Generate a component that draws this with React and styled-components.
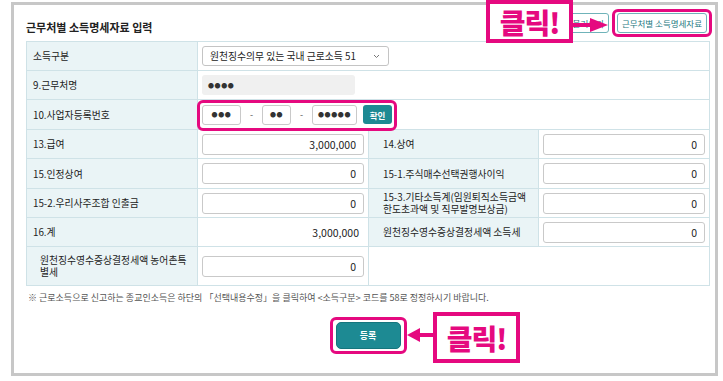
import styled, { createGlobalStyle } from "styled-components";

const MAGENTA = "#e5097f";
const TEAL = "#1d8a93";
const LINE = "#cfe2e7";
const FONT = `"Noto Sans CJK KR", "Noto Sans", sans-serif`;

const GlobalStyle = createGlobalStyle`
  body {
    margin: 0;
    background: #fff;
    font-family: ${FONT};
    color: #333;
  }
  * { box-sizing: border-box; }
`;

const Page = styled.div`
  position: relative;
  width: 723px;
  height: 381px;
  padding: 2px 0 0 11px;
  overflow: hidden;
`;

const Frame = styled.div`
  width: 707px;
  height: 374px;
  border: 3px solid #c7c7c7;
  padding: 0 5px 0 12px;
  display: flex;
  flex-direction: column;
`;

const Header = styled.div`
  display: flex;
  justify-content: space-between;
  align-items: flex-start;
  height: 36px;
  padding-right: 3px;
`;

const Title = styled.h2`
  align-self: flex-end;
  margin: 0 0 7px;
  font-size: 11px;
  line-height: 13px;
  font-weight: 700;
  color: #222;
`;

const Tools = styled.div`
  display: flex;
  gap: 8px;
  margin-top: 8px;
`;

const ToolButton = styled.button`
  height: 20px;
  padding: 0 4px;
  border: 1px solid #6fb3b9;
  border-radius: 3px;
  background: #fff;
  color: #1b7780;
  font-family: ${FONT};
  font-size: 8.5px;
  white-space: nowrap;
`;

const Ring = styled.div`
  position: relative;
  display: inline-flex;
  align-items: center;
  &::after {
    content: "";
    position: absolute;
    inset: ${(p) => p.$inset || "-5px"};
    border: 3px solid ${MAGENTA};
    border-radius: 6px;
    pointer-events: none;
  }
`;

const Grid = styled.div`
  display: grid;
  grid-template-columns: 171px 171px 170px 171px;
  grid-template-rows: 29px 29px 30px 29px 30px 29px 29px 39px;
  border-top: 1px solid ${LINE};
  border-left: 1px solid ${LINE};
`;

const Label = styled.div`
  display: flex;
  align-items: center;
  padding: 0 ${(p) => p.$end || 6}px 0 ${(p) => p.$indent || 6}px;
  background: #eaf4f6;
  border-right: 1px solid ${LINE};
  border-bottom: 1px solid ${LINE};
  font-size: 9.8px;
  line-height: 12px;
  color: #222;
  word-break: ${(p) => (p.$keep ? "keep-all" : "break-all")};
`;

const Value = styled.div`
  grid-column: span ${(p) => p.$span || 1};
  display: flex;
  align-items: center;
  justify-content: ${(p) => (p.$right ? "flex-end" : "flex-start")};
  padding: 0 ${(p) => (p.$right ? 9 : 4)}px 0 4px;
  background: #fff;
  border-right: 1px solid ${LINE};
  border-bottom: 1px solid ${LINE};
  font-size: 10.5px;
  color: #222;
`;

const Amount = styled.input`
  width: 100%;
  height: 21px;
  padding: 0 7px;
  border: 1px solid #c9c9c9;
  border-radius: 3px;
  background: #fff;
  font-family: ${FONT};
  font-size: 10.5px;
  color: #222;
  text-align: right;
  outline: none;
`;

const SelectBox = styled.div`
  display: flex;
  align-items: center;
  justify-content: space-between;
  width: 187px;
  height: 20px;
  padding: 0 8px 0 7px;
  border: 1px solid #c4c4c4;
  border-radius: 3px;
  font-size: 9.8px;
  color: #222;
`;

const Masked = styled.div`
  display: flex;
  align-items: center;
  justify-content: ${(p) => (p.$center ? "center" : "flex-start")};
  width: ${(p) => p.$w}px;
  height: 20px;
  padding: 0 6px;
  border: ${(p) => (p.$plain ? "none" : "1px solid #c9c9c9")};
  border-radius: 3px;
  background: ${(p) => (p.$plain ? "#f0f0f0" : "#fff")};
  font-size: 6px;
  letter-spacing: 0.6px;
  color: #333;
`;

const Dash = styled.span`
  width: 21px;
  text-align: center;
  font-size: 9px;
  color: #555;
`;

const SmallTeal = styled.button`
  margin-left: 6px;
  width: 29px;
  height: 19px;
  padding: 0;
  border: none;
  border-radius: 3px;
  background: ${TEAL};
  color: #fff;
  font-family: ${FONT};
  font-size: 8.5px;
  font-weight: 700;
`;

const Note = styled.p`
  margin: 6px 0 0 2px;
  font-size: 9px;
  line-height: 12px;
  color: #555;
  white-space: nowrap;
`;

const Footer = styled.div`
  display: flex;
  justify-content: center;
  margin-top: 18px;
`;

const SubmitButton = styled.button`
  width: 65px;
  height: 27px;
  border: 1px solid #15757d;
  border-radius: 5px;
  background: ${TEAL};
  color: #fff;
  font-family: ${FONT};
  font-size: 9px;
  font-weight: 700;
`;

const Callout = styled.div`
  position: absolute;
  left: ${(p) => p.$x}px;
  top: ${(p) => p.$y}px;
  width: 87px;
  height: ${(p) => p.$h}px;
  display: flex;
  align-items: center;
  justify-content: center;
  border: 4px solid ${MAGENTA};
  background: #fff;
  color: ${MAGENTA};
  font-family: ${FONT};
  font-size: 28px;
  font-weight: 900;
  letter-spacing: -1px;
`;

const Arrow = styled.svg`
  position: absolute;
  left: ${(p) => p.$x}px;
  top: ${(p) => p.$y}px;
`;

const Chevron = () => (
  <svg width="7" height="5" viewBox="0 0 7 5">
    <path d="M1 1l2.5 2.5L6 1" fill="none" stroke="#777" strokeWidth="1" />
  </svg>
);

const rows = [
  ["13.급여", "3,000,000", "14.상여", "0"],
  ["15.인정상여", "0", "15-1.주식매수선택권행사이익", "0"],
  ["15-2.우리사주조합 인출금", "0", "15-3.기타소득계(임원퇴직소득금액 한도초과액 및 직무발명보상금)", "0"],
];

export default function App() {
  return (
    <Page>
      <GlobalStyle />
      <Frame>
        <Header>
          <Title>근무처별 소득명세자료 입력</Title>
          <Tools>
            <ToolButton>자료 불러오기</ToolButton>
            <Ring $inset="-4px -5px -4px -5px">
              <ToolButton>근무처별 소득명세자료</ToolButton>
            </Ring>
          </Tools>
        </Header>

        <Grid>
          <Label>소득구분</Label>
          <Value $span={3}>
            <SelectBox>
              <span>원천징수의무 있는 국내 근로소득 51</span>
              <Chevron />
            </SelectBox>
          </Value>

          <Label>9.근무처명</Label>
          <Value $span={3}>
            <Masked $w={153} $plain>●●●●</Masked>
          </Value>

          <Label>10.사업자등록번호</Label>
          <Value $span={3}>
            <Ring $inset="-5px -5px -6px -5px">
              <Masked $w={39} $center>●●●</Masked>
              <Dash>-</Dash>
              <Masked $w={29} $center>●●</Masked>
              <Dash>-</Dash>
              <Masked $w={45} $center>●●●●●</Masked>
              <SmallTeal>확인</SmallTeal>
            </Ring>
          </Value>

          {rows.map(([l1, v1, l2, v2]) => [
            <Label key={l1}>{l1}</Label>,
            <Value key={l1 + "v"}>
              <Amount readOnly defaultValue={v1} />
            </Value>,
            <Label key={l2} $indent={14} $end={4} $keep>
              {l2}
            </Label>,
            <Value key={l2 + "v"}>
              <Amount readOnly defaultValue={v2} />
            </Value>,
          ])}

          <Label>16.계</Label>
          <Value $right>3,000,000</Value>
          <Label $indent={14}>원천징수영수증상결정세액 소득세</Label>
          <Value>
            <Amount readOnly defaultValue="0" />
          </Value>

          <Label $indent={13} $end={8}>원천징수영수증상결정세액 농어촌특별세</Label>
          <Value>
            <Amount readOnly defaultValue="0" />
          </Value>
          <Value $span={2} />
        </Grid>

        <Note>
          ※ 근로소득으로 신고하는 종교인소득은 하단의 「선택내용수정」을 클릭하여 &lt;소득구분&gt; 코드를 58로 정정하시기 바랍니다.
        </Note>

        <Footer>
          <Ring $inset="-5px -6px -5px -6px">
            <SubmitButton>등록</SubmitButton>
          </Ring>
        </Footer>
      </Frame>

      <Callout $x={486} $y={0} $h={43}>클릭!</Callout>
      <Arrow $x={573} $y={16} width="36" height="18" viewBox="0 0 36 18">
        <rect x="0" y="7" width="20" height="4" fill={MAGENTA} />
        <polygon points="17,2 35,9 17,16" fill={MAGENTA} />
      </Arrow>

      <Arrow $x={406} $y={327} width="28" height="16" viewBox="0 0 28 16">
        <polygon points="1,8 14,1 14,15" fill={MAGENTA} />
        <rect x="12" y="6" width="16" height="4" fill={MAGENTA} />
      </Arrow>
      <Callout $x={433} $y={312} $h={51}>클릭!</Callout>
    </Page>
  );
}
